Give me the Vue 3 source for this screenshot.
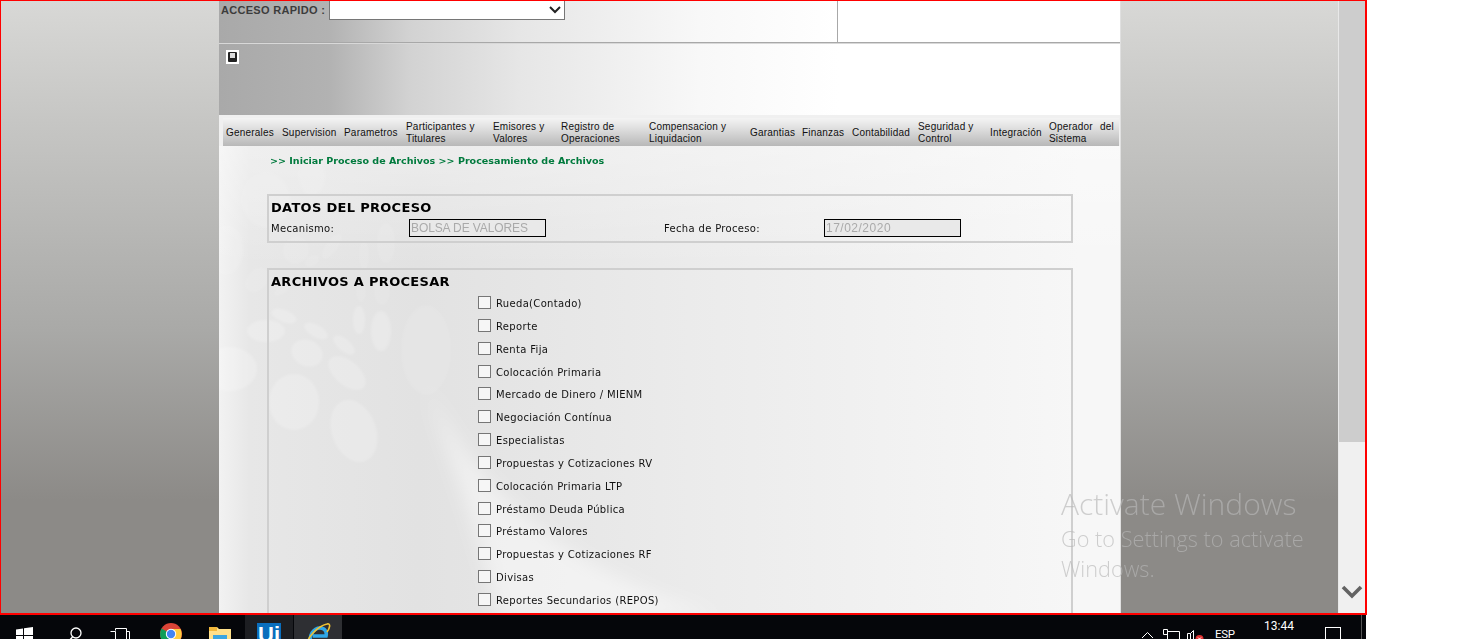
<template>
  <div class="screen">
    <div class="window">
      <div class="side"></div>
      <div class="center">
        <div class="quick-row">
          <div class="quick-left">
            <label>ACCESO RAPIDO :</label>
            <select class="quick-select"><option></option></select>
          </div>
          <div class="quick-right"></div>
        </div>
        <div class="banner">
          <span class="banner-icon"><i></i></span>
        </div>
        <div class="menu">
          <div class="menu-bar">
            <a
              v-for="m in menu"
              :key="m.text"
              :class="{ just: m.just }"
              :style="{ width: m.w + 'px' }"
            >{{ m.text }}</a>
          </div>
        </div>
        <div class="content">
          <svg class="decor" width="901" height="470" viewBox="0 0 901 470">
            <defs>
              <filter id="soft"><feGaussianBlur stdDeviation="1" /></filter>
              <filter id="softer"><feGaussianBlur stdDeviation="9" /></filter>
            </defs>
            <path
              d="M205 235 C 250 330, 330 420, 500 470 L 280 470 C 262 400, 235 320, 205 235Z"
              fill="#fff"
              fill-opacity="0.45"
              filter="url(#softer)"
            />
            <g fill="#fff" fill-opacity="0.2" filter="url(#soft)">
              <ellipse cx="75" cy="256" rx="25" ry="28" />
              <ellipse cx="135" cy="285" rx="22" ry="32" transform="rotate(-20 135 285)" />
              <ellipse cx="128" cy="227" rx="12" ry="22" transform="rotate(-50 128 227)" />
              <ellipse cx="88" cy="207" rx="16" ry="13" transform="rotate(25 88 207)" />
              <ellipse cx="125" cy="199" rx="13" ry="6" transform="rotate(40 125 199)" />
              <ellipse cx="97" cy="185" rx="13" ry="6" transform="rotate(30 97 185)" />
              <ellipse cx="65" cy="170" rx="13" ry="6" transform="rotate(20 65 170)" />
              <ellipse cx="47" cy="185" rx="19" ry="11" />
              <ellipse cx="140" cy="174" rx="6" ry="14" />
              <ellipse cx="162" cy="185" rx="10" ry="20" />
              <ellipse cx="10" cy="223" rx="28" ry="22" />
            </g>
            <g fill="#fff" fill-opacity="0.1" filter="url(#soft)">
              <ellipse cx="93" cy="30" rx="14" ry="20" />
              <ellipse cx="47" cy="54" rx="25" ry="28" />
              <ellipse cx="7" cy="104" rx="18" ry="25" />
              <ellipse cx="77" cy="104" rx="13" ry="14" transform="rotate(35 77 104)" />
              <ellipse cx="113" cy="100" rx="6" ry="15" transform="rotate(35 113 100)" />
              <ellipse cx="145" cy="109" rx="5" ry="15" />
              <ellipse cx="167" cy="97" rx="9" ry="20" />
              <ellipse cx="93" cy="115" rx="8" ry="5" transform="rotate(-30 93 115)" />
              <ellipse cx="38" cy="134" rx="10" ry="14" transform="rotate(40 38 134)" />
              <ellipse cx="63" cy="144" rx="9" ry="4" transform="rotate(-30 63 144)" />
              <ellipse cx="142" cy="144" rx="5" ry="12" />
              <ellipse cx="163" cy="144" rx="8" ry="15" />
              <ellipse cx="207" cy="204" rx="25" ry="45" />
            </g>
          </svg>
          <div class="crumb">&gt;&gt; Iniciar Proceso de Archivos &gt;&gt; Procesamiento de Archivos</div>
          <section class="box box-datos">
            <h3>DATOS DEL PROCESO</h3>
            <div class="datos-row">
              <span class="lbl lbl-a">Mecanismo:</span>
              <input class="ro ro-a" disabled value="BOLSA DE VALORES" />
              <span class="lbl lbl-b">Fecha de Proceso:</span>
              <input class="ro ro-b" disabled value="17/02/2020" />
            </div>
          </section>
          <section class="box box-archivos">
            <h3>ARCHIVOS A PROCESAR</h3>
            <div class="checks">
              <label v-for="a in archivos" :key="a" class="check">
                <span class="tick"></span>
                <span class="check-text">{{ a }}</span>
              </label>
            </div>
          </section>
        </div>
      </div>
      <div class="side side-right"></div>
      <div class="scrollbar">
        <div class="thumb"></div>
        <div class="track">
          <svg width="22" height="14" viewBox="0 0 22 14">
            <path d="M2 2 L11 11 L20 2" fill="none" stroke="#636363" stroke-width="3.6" />
          </svg>
        </div>
      </div>
      <div class="watermark">
        <div class="wm-title">Activate Windows</div>
        <div class="wm-sub">Go to Settings to activate<br />Windows.</div>
      </div>
    </div>
    <div class="taskbar">
      <svg class="ti" style="left:16px;top:12px" width="17" height="17" viewBox="0 0 17 17">
        <path fill="#fff" d="M0 2.4 7 1.4V8H0ZM8 1.3 17 0V8H8ZM0 9H7V15.6L0 14.6ZM8 9H17V17L8 15.7Z" />
      </svg>
      <svg class="ti" style="left:67px;top:12px" width="15" height="16" viewBox="0 0 15 16">
        <circle cx="9" cy="6" r="5" fill="none" stroke="#fff" stroke-width="1.3" />
        <path d="M5.5 10 1 15" stroke="#fff" stroke-width="1.5" />
      </svg>
      <svg class="ti" style="left:110px;top:13px" width="20" height="16" viewBox="0 0 20 16">
        <path d="M5.5 2.5V.5H16.5V14M.5 3.5H5.5V15H.5M16.5 3.5H19.5V15H16.5" fill="none" stroke="#fff" />
      </svg>
      <svg class="ti" style="left:160px;top:8px" width="22" height="22" viewBox="0 0 22 22">
        <circle cx="11" cy="11" r="11" fill="#db4437" />
        <path d="M11 11 1.5 5.5A11 11 0 0 0 11 22Z" fill="#0f9d58" />
        <path d="M11 6H20.5A11 11 0 0 1 11 22L11 11Z" fill="#ffcd40" />
        <circle cx="11" cy="11" r="5.2" fill="#fff" />
        <circle cx="11" cy="11" r="4.2" fill="#4285f4" />
      </svg>
      <svg class="ti" style="left:209px;top:11px" width="22" height="18" viewBox="0 0 22 18">
        <path d="M0 1H8L10 3H22V18H0Z" fill="#ffe08a" />
        <path d="M0 1H8V5H0Z" fill="#f2b83b" />
        <rect x="4" y="9" width="14" height="9" fill="#3aa5e0" />
      </svg>
      <div class="task-active task-ui">
        <span class="ui-logo">Ui</span>
      </div>
      <div class="task-active task-ie">
        <svg width="26" height="24" viewBox="0 0 26 24">
          <path d="M6 22C3 12 9 5 15 5 20 5 22 9 21 13H8" fill="none" stroke="#2fa7e8" stroke-width="3.6" />
          <path d="M2 23C1 15 13 3 22 1 26 0 25 5 22 9" fill="none" stroke="#f2c230" stroke-width="1.6" />
        </svg>
      </div>
      <svg class="ti" style="left:1141px;top:16px" width="13" height="8" viewBox="0 0 13 8">
        <path d="M1 7 6.5 1.5 12 7" fill="none" stroke="#fff" />
      </svg>
      <svg class="ti" style="left:1163px;top:14px" width="17" height="12" viewBox="0 0 17 12">
        <path d="M4.5 2.5H16.5V12M4.5 5V12M.5 .5H4.5V5.5H.5Z" fill="none" stroke="#fff" />
      </svg>
      <svg class="ti" style="left:1187px;top:15px" width="17" height="12" viewBox="0 0 17 12">
        <path d="M.5 3.5H3.5L6.5 .5V12M3.5 3.5V12M.5 3.5V12" fill="none" stroke="#fff" />
        <circle cx="12.5" cy="9" r="4" fill="#e03131" />
        <path d="M11 7.5 14 10.5M14 7.5 11 10.5" stroke="#fff" />
      </svg>
      <span class="tray-esp">ESP</span>
      <span class="tray-time">13:44</span>
      <span class="tray-line"></span>
      <span class="tray-notif"></span>
    </div>
  </div>
</template>

<script setup>
const menu = [
  { text: 'Generales', w: 56 },
  { text: 'Supervision', w: 62 },
  { text: 'Parametros', w: 62 },
  { text: 'Participantes y Titulares', w: 87 },
  { text: 'Emisores y Valores', w: 68 },
  { text: 'Registro de Operaciones', w: 88 },
  { text: 'Compensacion y Liquidacion', w: 101 },
  { text: 'Garantias', w: 52 },
  { text: 'Finanzas', w: 50 },
  { text: 'Contabilidad', w: 66 },
  { text: 'Seguridad y Control', w: 72 },
  { text: 'Integración', w: 59 },
  { text: 'Operador del Sistema', w: 69, just: true }
]

const archivos = [
  'Rueda(Contado)',
  'Reporte',
  'Renta Fija',
  'Colocación Primaria',
  'Mercado de Dinero / MIENM',
  'Negociación Contínua',
  'Especialistas',
  'Propuestas y Cotizaciones RV',
  'Colocación Primaria LTP',
  'Préstamo Deuda Pública',
  'Préstamo Valores',
  'Propuestas y Cotizaciones RF',
  'Divisas',
  'Reportes Secundarios (REPOS)'
]
</script>

<style>
html,
body {
  margin: 0;
  background: #fff;
  overflow: hidden;
}
</style>

<style scoped>
.screen {
  width: 1466px;
  height: 639px;
  overflow: hidden;
  font-family: 'Liberation Sans', Arial, sans-serif;
}
.window {
  position: relative;
  box-sizing: border-box;
  width: 1367px;
  height: 615px;
  border: 1px solid #f00;
  border-bottom-width: 2px;
  border-right-width: 2px;
  display: flex;
  overflow: hidden;
}
.side {
  width: 218px;
  flex: none;
  background: linear-gradient(#d8d8d6 0, #c6c6c4 120px, #a9a9a7 330px, #8c8a87 500px, #8c8a87 100%);
}
.side-right {
  width: 217px;
  border-left: 1px solid #e0e0e0;
}
.center {
  width: 901px;
  flex: none;
  background: #fff;
  display: flex;
  flex-direction: column;
}
.quick-row {
  display: flex;
  height: 41px;
  border-bottom: 1px solid #a8a8a8;
  background: linear-gradient(90deg, #a9a9a9 0, #b2b2b2 110px, #d2d2d2 190px, #e6e6e6 300px, #f8f8f8 480px, #fff 620px);
}
.quick-left {
  width: 619px;
  box-sizing: border-box;
  padding-left: 2px;
  border-right: 1px solid #a8a8a8;
  display: flex;
  align-items: flex-start;
  gap: 4px;
  flex: none;
}
.quick-left label {
  font-size: 11px;
  font-weight: bold;
  color: #3c3c3c;
  line-height: 19px;
  letter-spacing: 0.3px;
  width: 104px;
  white-space: nowrap;
}
.quick-select {
  appearance: none;
  width: 236px;
  height: 19px;
  margin: 0;
  background: #fff url("data:image/svg+xml,%3Csvg xmlns='http://www.w3.org/2000/svg' width='12' height='8'%3E%3Cpath d='M1 1l5 5 5-5' fill='none' stroke='%23222' stroke-width='2'/%3E%3C/svg%3E") no-repeat right 3px center;
  border: 1px solid #767676;
  border-top: 0;
  border-radius: 0;
  font-size: 11px;
}
.quick-right {
  flex: 1;
  background: #fff;
}
.banner {
  height: 72px;
  box-sizing: border-box;
  padding: 6px 0 0 7px;
  background: linear-gradient(90deg, #a9a9a9 0, #b2b2b2 110px, #d2d2d2 190px, #e6e6e6 300px, #f8f8f8 480px, #fff 620px);
  border-top: 1px solid #d8d8d8;
}
.banner-icon {
  display: block;
  width: 13px;
  height: 14px;
  box-sizing: border-box;
  background: #fff;
  padding: 2px;
}
.banner-icon i {
  display: block;
  height: 10px;
  width: 9px;
  background: #222;
  border-radius: 1px;
  position: relative;
}
.banner-icon i::after {
  content: '';
  position: absolute;
  left: 2px;
  top: 1px;
  width: 5px;
  height: 5px;
  background: #ddd;
}
.menu {
  height: 31px;
  box-sizing: border-box;
  padding: 3px 1px 0 4px;
  background: #f0f0f0;
}
.menu-bar {
  height: 28px;
  padding-left: 3px;
  display: flex;
  background: linear-gradient(#f4f4f4 0, #e2e2e2 9px, #b8b8b8 100%);
}
.menu a {
  flex: none;
  box-sizing: border-box;
  padding: 2px 4px 0 0;
  height: 28px;
  display: flex;
  align-items: center;
  font-size: 10px;
  line-height: 12px;
  letter-spacing: 0.2px;
  color: #111;
}
.menu a.just {
  text-align: justify;
}
.content {
  position: relative;
  flex: 1;
  overflow: hidden;
  background:
    linear-gradient(rgba(255, 255, 255, 0.35), rgba(255, 255, 255, 0) 120px),
    linear-gradient(90deg, #f2f2f2 0, #e7e7e7 30px, #e2e2e2 200px, #ececec 500px, #f7f7f7 860px);
}
.decor {
  position: absolute;
  left: 0;
  top: 0;
}
.crumb {
  position: relative;
  margin: 9px 0 0 51px;
  font: bold 9.55px/12px 'DejaVu Sans', Verdana, sans-serif;
  color: #007a3d;
  white-space: nowrap;
}
.box {
  position: relative;
  margin-left: 48px;
  width: 806px;
  box-sizing: border-box;
  border: 2px solid #cfcfcf;
  padding: 0 2px;
}
.box h3 {
  margin: 0;
  font: bold 13px/16px 'DejaVu Sans', Verdana, sans-serif;
  letter-spacing: 0.3px;
  color: #000;
}
.box-datos {
  margin-top: 27px;
  height: 49px;
  padding-top: 4px;
}
.datos-row {
  display: flex;
  align-items: center;
  height: 19px;
  margin-top: 2px;
  font: 10px/12px 'DejaVu Sans', Verdana, sans-serif;
  letter-spacing: 0.33px;
  color: #111;
}
.lbl {
  padding-top: 2px;
}
.lbl-a {
  width: 138px;
  flex: none;
}
.lbl-b {
  width: 160px;
  flex: none;
  margin-left: 118px;
}
.ro {
  flex: none;
  box-sizing: border-box;
  height: 18px;
  margin: 0;
  padding: 0 1px;
  border: 1px solid #000;
  background: #e9e9e9;
  color: #aaa;
  font: 12px 'Liberation Sans', Arial, sans-serif;
  border-radius: 0;
}
.ro-a {
  width: 137px;
  letter-spacing: -0.1px;
}
.ro-b {
  width: 137px;
  letter-spacing: 0.5px;
}
.box-archivos {
  margin-top: 25px;
  height: 400px;
  padding-top: 4px;
}
.checks {
  margin-left: 207px;
  margin-top: 6px;
  display: flex;
  flex-direction: column;
  gap: 9.85px;
}
.check {
  display: flex;
  align-items: center;
  height: 13px;
  font: 10px/13px 'DejaVu Sans', Verdana, sans-serif;
  letter-spacing: 0.33px;
  color: #111;
}
.check-text {
  padding-top: 2px;
}
.tick {
  width: 11px;
  height: 11px;
  border: 1px solid #767676;
  background: #f6f6f6;
  margin-right: 5px;
  flex: none;
}
.scrollbar {
  flex: 1;
  display: flex;
  flex-direction: column;
  border-left: 1px solid #e8e8e8;
  background: #f0f0f0;
}
.thumb {
  height: 441px;
  background: #cdcdcd;
}
.track {
  flex: 1;
  display: flex;
  align-items: flex-end;
  justify-content: center;
  padding-bottom: 14px;
}
.watermark {
  position: absolute;
  left: 1060px;
  top: 485px;
  color: rgba(183, 183, 183, 0.66);
  font-family: 'Open Sans', 'Noto Sans', sans-serif;
  font-weight: 300;
  pointer-events: none;
}
.wm-title {
  font-size: 30px;
  line-height: 36px;
}
.wm-sub {
  margin-top: 2px;
  font-size: 21.7px;
  line-height: 30px;
}
.taskbar {
  position: relative;
  width: 1366px;
  height: 24px;
  background: #05060a;
  color: #fff;
  overflow: hidden;
}
.ti {
  position: absolute;
}
.task-active {
  position: absolute;
  top: 0;
  height: 24px;
  width: 48px;
  display: flex;
  justify-content: center;
  box-sizing: border-box;
}
.task-ui {
  left: 245px;
  background: #1d1e22;
  padding-top: 8px;
}
.task-ie {
  left: 294px;
  background: #2e2f33;
  padding-top: 8px;
}
.ui-logo {
  display: block;
  width: 24px;
  height: 24px;
  background: #0a6ebd;
  color: #fff;
  font: bold 22px/24px 'Liberation Sans', Arial, sans-serif;
  text-align: center;
}
.tray-esp {
  position: absolute;
  left: 1215px;
  top: 15px;
  font: 11.5px/9px Roboto, sans-serif;
  letter-spacing: -0.3px;
}
.tray-time {
  position: absolute;
  left: 1264px;
  top: 3px;
  font: 12px/16px Roboto, sans-serif;
}
.tray-line {
  position: absolute;
  left: 1361px;
  top: 0;
  height: 24px;
  width: 1px;
  background: #555;
}
.tray-notif {
  position: absolute;
  left: 1325px;
  top: 12px;
  width: 14px;
  height: 20px;
  border: 1px solid #fff;
}
</style>
